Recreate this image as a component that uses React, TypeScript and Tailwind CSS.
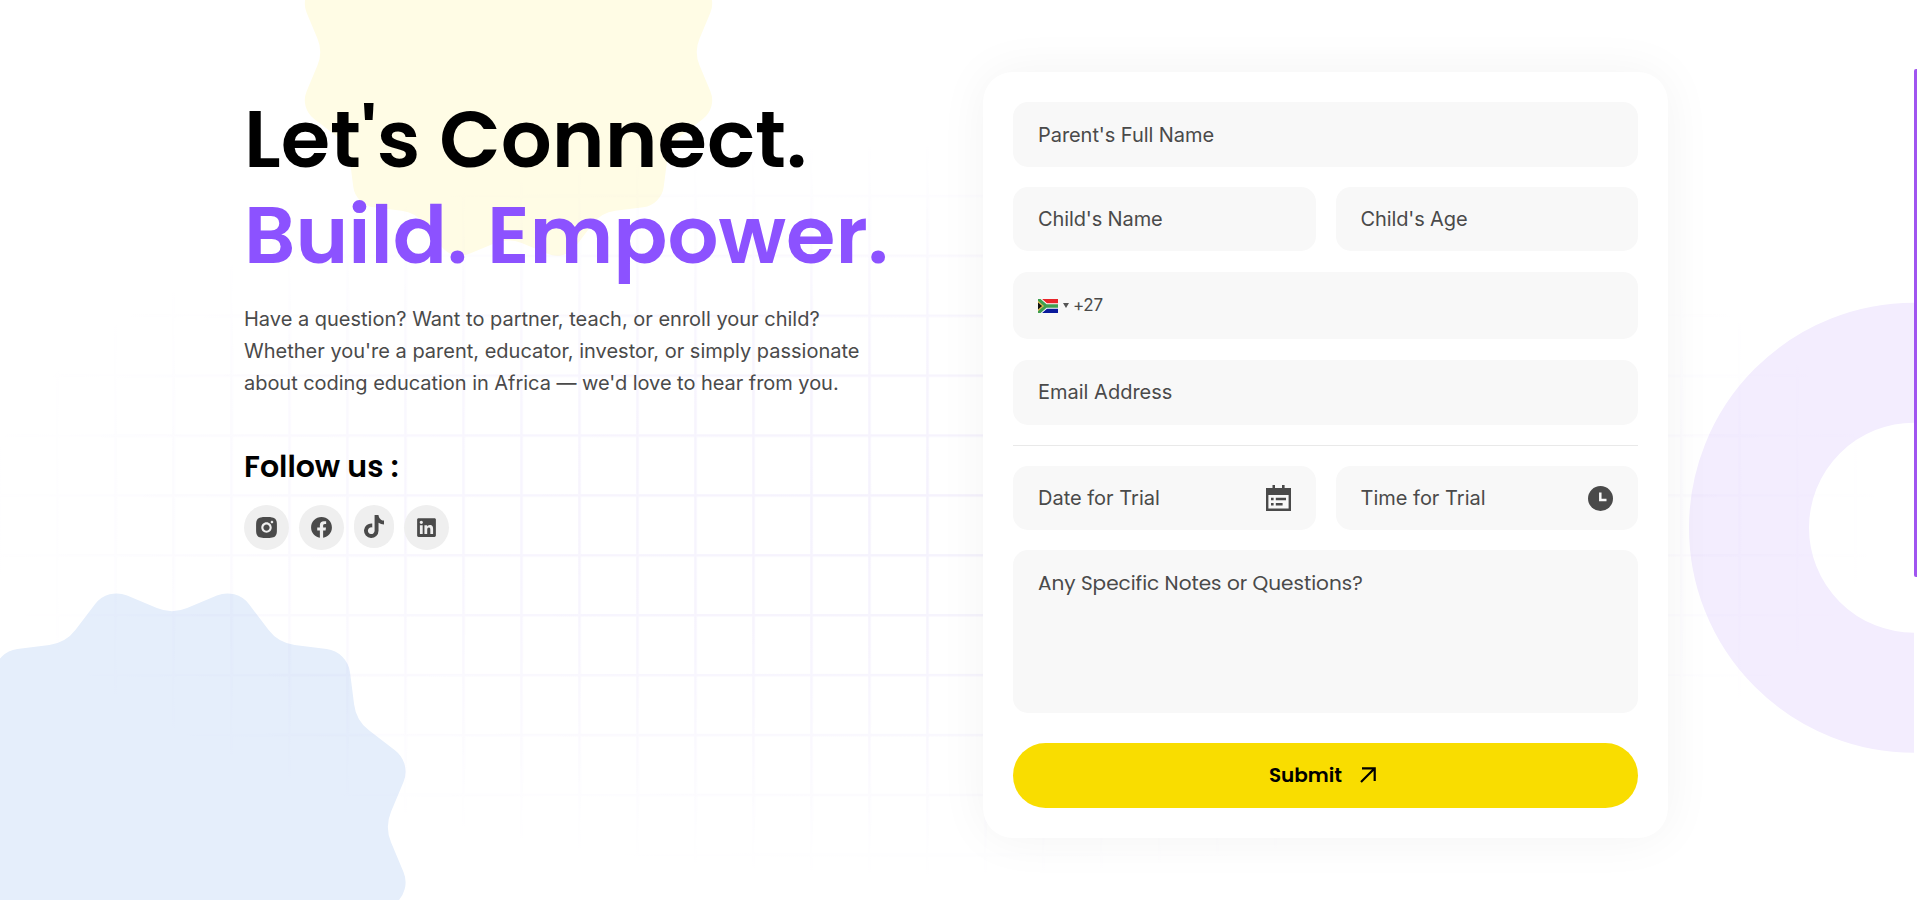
import { RiInstagramFill, RiFacebookCircleFill, RiLinkedinBoxFill } from "react-icons/ri";
import { FaTiktok } from "react-icons/fa6";

const HEAD = "font-['Poppins','Inter',sans-serif]";

// Twelve-lobed badge: a star polygon whose corners are rounded by arcs.
function scallop(cx: number, cy: number, k: number) {
  const verts = Array.from({ length: 24 }, (_, i) => {
    const a = (i * Math.PI) / 12;
    const r = k * (i % 2 ? 248 : 212.7);
    return [cx + r * Math.cos(a), cy + r * Math.sin(a)];
  });
  let d = "";
  verts.forEach(([x, y], i) => {
    const outer = i % 2 === 1;
    const t = k * (outer ? 20.9 : 16.4);
    const rho = k * (outer ? 27 : 39);
    const toward = ([px, py]: number[]) => {
      const len = Math.hypot(px - x, py - y);
      return `${(x + ((px - x) * t) / len).toFixed(2)} ${(y + ((py - y) * t) / len).toFixed(2)}`;
    };
    const start = toward(verts[(i + 23) % 24]);
    const end = toward(verts[(i + 1) % 24]);
    d += `${i ? "L" : "M"}${start}A${rho} ${rho} 0 0 ${outer ? 1 : 0} ${end}`;
  });
  return `${d}Z`;
}

function Backdrop() {
  return (
    <svg className="absolute inset-0 h-[900px] w-[1917px]" viewBox="0 0 1917 900" aria-hidden="true">
      <defs>
        <pattern id="grid" x="56.2" y="15" width="58" height="59.9" patternUnits="userSpaceOnUse">
          <path d="M1.3 0V59.9M0 1.3H58" stroke="#8560e8" strokeWidth="2.6" fill="none" />
        </pattern>
        <radialGradient id="fade" gradientUnits="userSpaceOnUse" cx="0" cy="0" r="1" gradientTransform="translate(930 510) scale(960 370)">
          <stop offset="0" stopColor="#fff" stopOpacity="0.085" />
          <stop offset="0.5" stopColor="#fff" stopOpacity="0.06" />
          <stop offset="1" stopColor="#fff" stopOpacity="0" />
        </radialGradient>
        <mask id="gridMask" maskUnits="userSpaceOnUse" x="0" y="0" width="1914" height="900">
          <rect width="1914" height="900" fill="url(#fade)" />
        </mask>
        <clipPath id="page">
          <rect width="1914" height="900" />
        </clipPath>
      </defs>
      <path d={scallop(508.5, 52, 0.872)} fill="#fffce5" />
      <path d={scallop(172, 827, 1)} fill="#e5eefb" />
      <circle cx="1914" cy="527.7" r="165" fill="none" stroke="#f3edfe" strokeWidth="120" clipPath="url(#page)" />
      <rect width="1914" height="900" fill="url(#grid)" mask="url(#gridMask)" />
    </svg>
  );
}

function Field({ label, className }: { label: string; className: string }) {
  return (
    <div className={`flex items-center rounded-[15px] bg-[#f8f8f8] px-[25px] ${className}`}>
      <span>{label}</span>
    </div>
  );
}

function Flag() {
  return (
    <svg width="20" height="14" viewBox="0 0 20 14">
      <path d="M0 0H20V7H0Z" fill="#e8262b" />
      <path d="M0 7H20V14H0Z" fill="#0a1a9c" />
      <path d="M0 0L8 7L0 14M8 7H20" stroke="#fff" strokeWidth="5.4" fill="none" />
      <path d="M0 0L8 7L0 14M8 7H20" stroke="#3f9f50" strokeWidth="3.4" fill="none" />
      <path d="M-1 1.8L5 7L-1 12.2Z" fill="#111" stroke="#d9b84a" strokeWidth="1.2" />
    </svg>
  );
}

function CalendarIcon() {
  return (
    <svg width="25" height="26" viewBox="0 0 25 26" fill="#4a4a4a">
      <path fillRule="evenodd" d="M0 3H6.5V0H9V3H16V0H18.6V3H25V26H0ZM2.4 10V23.4H22.6V10Z" />
      <path d="M5 12.8H7.6V15.2H5ZM9.8 12.8H20V15.2H9.8ZM5 18H7.6V20.4H5ZM9.8 18H16.6V20.4H9.8Z" />
    </svg>
  );
}

function ClockIcon() {
  return (
    <svg width="25" height="25" viewBox="0 0 25 25">
      <circle cx="12.5" cy="12.5" r="12.5" fill="#4a4a4a" />
      <path d="M12.3 6.5V13.9H18.5" stroke="#f8f8f8" strokeWidth="2.5" fill="none" />
    </svg>
  );
}

export default function App() {
  return (
    <div className="relative flex h-[900px] w-[1917px] overflow-hidden bg-white font-['Inter',sans-serif] text-xl text-[#4a4a4a]">
      <Backdrop />
      <main className="relative flex flex-1 items-start pl-[244px]">
        <section className="w-[739px] pt-[91px]">
          <h1 className={`${HEAD} text-[80px] leading-[96px] font-semibold whitespace-nowrap text-black`}>
            <span className="block">Let's Connect.</span>
            <span className="block text-[#8c52ff]">Build. Empower.</span>
          </h1>
          <p className="mt-5 w-[650px] leading-8">
            Have a question? Want to partner, teach, or enroll your child?
            <br />
            Whether you're a parent, educator, investor, or simply passionate
            <br />
            <span className="tracking-[-0.04px]">about coding education in Africa — we'd love to hear from you.</span>
          </p>
          <h2 className={`${HEAD} mt-[50px] text-[30px] leading-9 font-semibold text-black`}>Follow us :</h2>
          <div className="mt-[20px] flex items-start gap-[10px]">
            <a className="rounded-full bg-[#efefef] p-[10px]"><RiInstagramFill size={25} /></a>
            <a className="rounded-full bg-[#efefef] p-[10px]"><RiFacebookCircleFill size={25} /></a>
            <a className="rounded-full bg-[#efefef] p-[10px]"><FaTiktok className="h-[23px] w-5" /></a>
            <a className="rounded-full bg-[#efefef] p-[10px]"><RiLinkedinBoxFill size={25} /></a>
          </div>
        </section>
        <form className="mt-[72px] flex w-[685px] flex-col rounded-[30px] bg-white p-[30px] shadow-[0_0_50px_rgba(0,0,0,0.05)]">
          <Field label="Parent's Full Name" className="h-[65px] tracking-[-0.06px]" />
          <div className="mt-5 grid grid-cols-2 gap-5">
            <Field label="Child's Name" className="h-16 tracking-[-0.12px]" />
            <Field label="Child's Age" className="h-16 tracking-[-0.12px]" />
          </div>
          <div className="mt-[21px] flex h-[67px] items-center rounded-[15px] bg-[#f8f8f8] px-[25px] text-[17px] tracking-[-0.3px]">
            <Flag />
            <svg className="mr-[4px] ml-[5px]" width="6" height="5" viewBox="0 0 6 5"><path d="M0 0H6L3 5Z" fill="#555" /></svg>
            <span>+27</span>
          </div>
          <Field label="Email Address" className="mt-[21px] h-[65px] pb-px" />
          <hr className="mt-5 border-t border-[#e9e9e9]" />
          <div className="mt-5 grid grid-cols-2 gap-5">
            <div className="flex h-16 items-center justify-between rounded-[15px] bg-[#f8f8f8] px-[25px]">
              <span>Date for Trial</span>
              <CalendarIcon />
            </div>
            <div className="flex h-16 items-center justify-between rounded-[15px] bg-[#f8f8f8] px-[25px]">
              <span>Time for Trial</span>
              <ClockIcon />
            </div>
          </div>
          <div className={`${HEAD} mt-5 h-[163px] rounded-[15px] bg-[#f8f8f8] px-[25px] pt-[18px] leading-[30px]`}>
            <span>Any Specific Notes or Questions?</span>
          </div>
          <button type="button" className={`${HEAD} mt-[30px] flex h-[65px] items-center justify-center gap-[18px] rounded-full bg-[#f9dd00] pr-[6px] pb-[2px] font-semibold text-black`}>
            <span>Submit</span>
            <svg width="16" height="16" viewBox="0 0 16 16"><path d="M1 15L14 2M2 1.3H14.7V14" stroke="#000" strokeWidth="2.2" fill="none" /></svg>
          </button>
        </form>
      </main>
      <aside className="relative w-[3px] bg-white pt-[69px]">
        <div className="h-[508px] rounded-l-[2px] bg-[#a055f0]" />
      </aside>
    </div>
  );
}
